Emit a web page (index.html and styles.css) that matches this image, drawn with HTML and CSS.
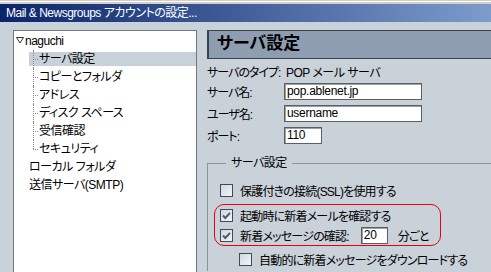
FILE: index.html
```html
<!DOCTYPE html>
<html lang="ja">
<head>
  <meta charset="UTF-8">
  <title>Mail &amp; Newsgroups アカウントの設定</title>
  <link rel="stylesheet" href="styles.css">
</head>
<body>
  <div class="frame-edge"></div>
  <div class="titlebar">Mail &amp; Newsgroups アカウントの設定...</div>

  <div class="content">
    <!-- Account tree -->
    <div class="tree">
      <div class="tree-row account">
        <svg class="twisty" width="8" height="7" viewBox="0 0 8 7"><path d="M0.5 0.5 H7.5 L4 6 Z" fill="none" stroke="#333" stroke-width="1"/></svg>naguchi
      </div>
      <ul class="tree-children">
        <li class="selected">サーバ設定</li>
        <li>コピーとフォルダ</li>
        <li>アドレス</li>
        <li>ディスク スペース</li>
        <li>受信確認</li>
        <li>セキュリティ</li>
      </ul>
      <div class="tree-row top">ローカル フォルダ</div>
      <div class="tree-row top">送信サーバ(SMTP)</div>
    </div>

    <!-- Settings pane -->
    <div class="pane">
      <div class="pane-header">サーバ設定</div>

      <div class="field-row first">
        <span class="field-label">サーバのタイプ:</span>
        <span class="field-value">POP メール サーバ</span>
      </div>
      <div class="field-row">
        <span class="field-label">サーバ名:</span>
        <input class="textbox wide" type="text" value="pop.ablenet.jp">
      </div>
      <div class="field-row">
        <span class="field-label">ユーザ名:</span>
        <input class="textbox wide" type="text" value="username">
      </div>
      <div class="field-row">
        <span class="field-label">ポート:</span>
        <input class="textbox port" type="text" value="110">
      </div>

      <fieldset class="group">
        <legend>サーバ設定</legend>
        <div class="check-row">
          <span class="checkbox"></span>保護付きの接続(SSL)を使用する
        </div>
        <div class="highlight">
          <div class="check-row">
            <span class="checkbox"><svg width="11" height="11" viewBox="0 0 11 11"><path d="M2 5.5 L4.3 8 L9 2.8" fill="none" stroke="#4f5d6b" stroke-width="2"/></svg></span>起動時に新着メールを確認する
          </div>
          <div class="check-row">
            <span class="checkbox"><svg width="11" height="11" viewBox="0 0 11 11"><path d="M2 5.5 L4.3 8 L9 2.8" fill="none" stroke="#4f5d6b" stroke-width="2"/></svg></span>新着メッセージの確認:
            <input class="textbox minutes" type="text" value="20">
            <span class="unit">分ごと</span>
          </div>
        </div>
        <div class="check-row sub">
          <span class="checkbox"></span>自動的に新着メッセージをダウンロードする
        </div>
      </fieldset>
    </div>
  </div>
</body>
</html>
```

FILE: styles.css
```css
/* Reset */
* {
  margin: 0;
  padding: 0;
  box-sizing: border-box;
}

html, body {
  width: 100%;
  height: 100%;
  overflow: hidden;
}

body {
  background-color: #c9d1d9;
  color: #000;
  font-family: "Liberation Sans", "Noto Sans CJK JP", sans-serif;
  font-size: 12px;
  font-feature-settings: "palt";
  letter-spacing: -0.5px;
}

/* Window frame + title */
.frame-edge {
  height: 4px;
  background: linear-gradient(#d4d0c8 1px, #fff 1px, #fff 2px, #d4d0c8 2px);
}

.titlebar {
  height: 18px;
  line-height: 18px;
  padding-left: 6px;
  color: #fff;
  background: linear-gradient(to right, #0a246a, #7c9ccc);
  white-space: nowrap;
}

/* Main area */
.content {
  display: flex;
  gap: 10px;
  padding: 8px 0 0 13px;
  height: calc(100% - 22px);
  overflow: hidden;
}

/* Left: account tree */
.tree {
  flex-shrink: 0;
  width: 184px;
  height: 260px;
  background-color: #fff;
  border: 1px solid #6f777f;
  padding-top: 1px;
}

.tree-row {
  height: 18px;
  line-height: 18px;
  white-space: nowrap;
}

.tree-row.account {
  padding-left: 2px;
}

.twisty {
  margin-right: 1px;
  vertical-align: 1px;
}

.tree-row.top {
  padding-left: 15px;
}

.tree-children {
  list-style: none;
}

.tree-children li {
  position: relative;
  height: 18px;
  line-height: 18px;
  margin-left: 15px;
  padding-left: 10px;
  white-space: nowrap;
}

/* dotted connector lines */
.tree-children li::before {
  content: "";
  position: absolute;
  left: 4px;
  top: 9px;
  width: 5px;
  border-top: 1px dotted #8a8a8a;
}

.tree-children li::after {
  content: "";
  position: absolute;
  left: 4px;
  top: 0;
  height: 18px;
  border-left: 1px dotted #8a8a8a;
}

.tree-children li:last-child::after {
  height: 9px;
}

.tree-children li.selected {
  background: linear-gradient(transparent 2px, #c8d0da 2px, #c8d0da 16px, transparent 16px);
}

/* Right: settings pane */
.pane {
  flex: 0 0 300px;
}

.pane-header {
  height: 29px;
  line-height: 26px;
  padding-left: 8px;
  background-color: #8e9eb0;
  border-style: solid;
  border-color: #3a4450;
  border-width: 1px 0 1px 2px;
  font-size: 17px;
  font-weight: bold;
  letter-spacing: 0;
}

.field-row {
  display: flex;
  align-items: center;
  height: 22px;
  white-space: nowrap;
}

.field-row.first {
  height: 18px;
  margin-top: 3px;
}

.field-label {
  width: 77px;
  flex-shrink: 0;
  letter-spacing: -1px;
}

.field-value {
  padding-left: 2px;
}

.textbox {
  height: 17px;
  padding: 0 2px;
  border: 1px solid #5a5f66;
  box-shadow: inset 1px 1px 0 #9aa0a6;
  background-color: #fff;
  font: inherit;
  font-feature-settings: inherit;
  letter-spacing: -0.3px;
  color: #000;
  outline: none;
}

.textbox.wide {
  width: 138px;
}

.textbox.port {
  width: 38px;
}

.textbox.minutes {
  width: 27px;
  margin-left: 12px;
}

/* Group box */
.group {
  margin-top: 9px;
  padding: 8px 0 0 12px;
  border: none;
  border-top: 1px solid #8a939d;
  border-left: 1px solid #8a939d;
}

.group legend {
  margin-left: 6px;
  padding: 0 5px;
  line-height: 16px;
}

.check-row {
  display: flex;
  align-items: center;
  height: 23px;
  white-space: nowrap;
  letter-spacing: -0.8px;
}

.check-row.sub {
  padding-left: 19px;
}

.checkbox {
  display: inline-flex;
  align-items: center;
  justify-content: center;
  width: 13px;
  height: 13px;
  margin-right: 7px;
  border: 1px solid #3e4c5a;
  background: linear-gradient(135deg, #cfd8e0, #f2f5f8);
  flex-shrink: 0;
}

.unit {
  margin-left: 10px;
}

/* red annotation ring */
.highlight {
  width: 227px;
  margin: 2px 0 2px -6px;
  padding-left: 5px;
  border: 1px solid #e8000c;
  border-radius: 10px;
}

.highlight .check-row {
  height: 20px;
}
```
